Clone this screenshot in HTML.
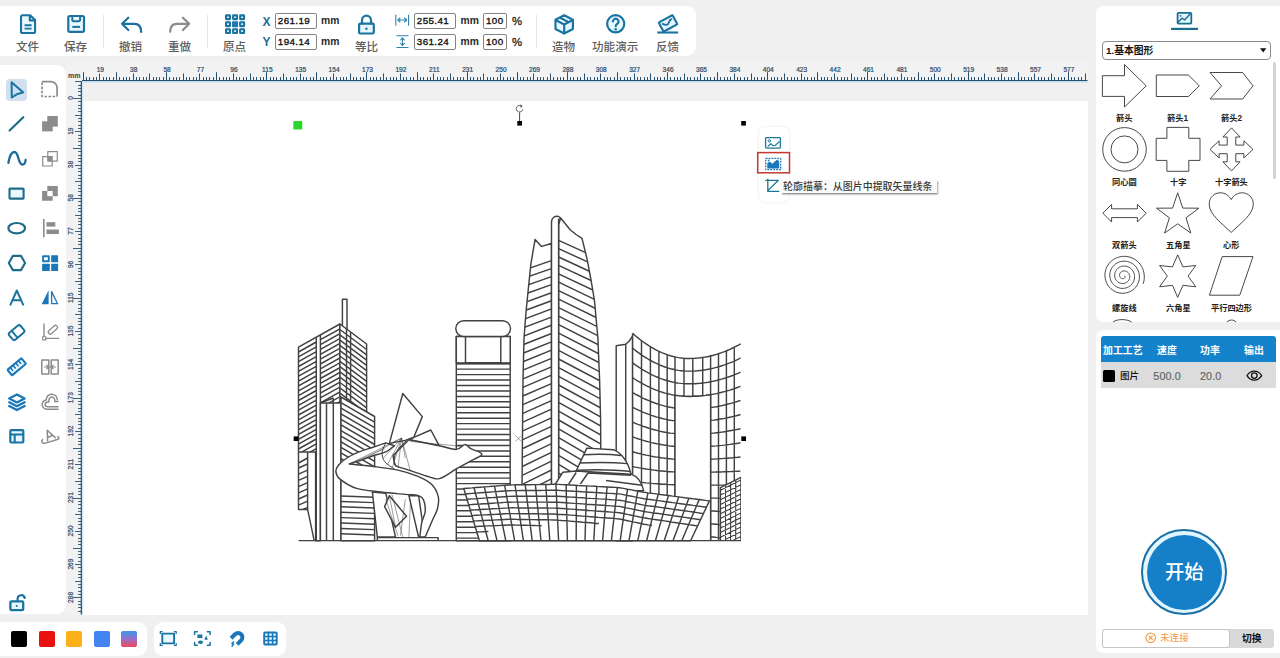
<!DOCTYPE html><html><head><meta charset="utf-8"><title>Laser editor</title><style>
html,body{margin:0;padding:0}
body{width:1280px;height:658px;background:#f0f0f0;position:relative;overflow:hidden;font-family:"Liberation Sans",sans-serif;color:#000}
.p{position:absolute;background:#fff}
.t{position:absolute;overflow:visible}
.t text{font-family:"Liberation Sans","Noto Sans CJK SC",sans-serif;font-size:1000px}
.a{position:absolute}
.in{position:absolute;box-sizing:border-box;border:1px solid #838383;border-radius:2px;background:#fff;font-size:9.8px;line-height:14.5px;padding:0 0 0 1.8px;color:#111;font-weight:normal;-webkit-text-stroke:0.35px #111;letter-spacing:0.4px}
.mm{position:absolute;font-size:10.3px;font-weight:bold;color:#2a2a2a;line-height:12px}
.sep{position:absolute;width:1px;background:#e4e4e4;top:15px;height:33px}
.lab{position:absolute;font-weight:bold;color:#1c6e9c;font-size:12px;line-height:12px}
</style></head><body><div class="p" style="left:0;top:6px;width:696px;height:50px;border-radius:0 9px 9px 0"></div><svg class="t" style="left:16.40px;top:40.80px" width="23.20" height="13.92" viewBox="0 0 2000 1200" fill="#5e5e5e" ><text x="0" y="880" font-weight="500">文件</text></svg><svg class="t" style="left:64.40px;top:40.80px" width="23.20" height="13.92" viewBox="0 0 2000 1200" fill="#5e5e5e" ><text x="0" y="880" font-weight="500">保存</text></svg><svg class="t" style="left:119.40px;top:40.80px" width="23.20" height="13.92" viewBox="0 0 2000 1200" fill="#5e5e5e" ><text x="0" y="880" font-weight="500">撤销</text></svg><svg class="t" style="left:167.90px;top:40.80px" width="23.20" height="13.92" viewBox="0 0 2000 1200" fill="#5e5e5e" ><text x="0" y="880" font-weight="500">重做</text></svg><svg class="t" style="left:223.40px;top:40.80px" width="23.20" height="13.92" viewBox="0 0 2000 1200" fill="#5e5e5e" ><text x="0" y="880" font-weight="500">原点</text></svg><svg class="t" style="left:355.10px;top:40.80px" width="23.20" height="13.92" viewBox="0 0 2000 1200" fill="#5e5e5e" ><text x="0" y="880" font-weight="500">等比</text></svg><svg class="t" style="left:552.40px;top:40.80px" width="23.20" height="13.92" viewBox="0 0 2000 1200" fill="#5e5e5e" ><text x="0" y="880" font-weight="500">造物</text></svg><svg class="t" style="left:592.30px;top:40.80px" width="46.40" height="13.92" viewBox="0 0 4000 1200" fill="#5e5e5e" ><text x="0" y="880" font-weight="500">功能演示</text></svg><svg class="t" style="left:655.90px;top:40.80px" width="23.20" height="13.92" viewBox="0 0 2000 1200" fill="#5e5e5e" ><text x="0" y="880" font-weight="500">反馈</text></svg><div class="sep" style="left:103px"></div><div class="sep" style="left:207px"></div><div class="sep" style="left:536px"></div><svg class="a" style="left:0;top:0;pointer-events:none" width="700" height="60" viewBox="0 0 700 60" fill="none" stroke-linecap="round" stroke-linejoin="round"><path d="M22.6 15.2h7.6l4.9 4.9v11.3a1.6 1.6 0 0 1-1.6 1.6h-10.9a1.6 1.6 0 0 1-1.6-1.6v-14.6a1.6 1.6 0 0 1 1.6-1.6zM29.8 15.4v5h5" stroke="#1b739f" stroke-width="2.1" fill="#e6f7ff"/><path d="M24.6 25.2h7M24.6 28.6h7" stroke="#1b739f" stroke-width="1.9" stroke-linecap="butt"/><rect x="68.3" y="16" width="15.7" height="15.8" rx="1.6" stroke="#1b739f" stroke-width="2.2" fill="#e6f7ff"/><path d="M72.3 16.4v3.2a1.6 1.6 0 0 0 1.6 1.6h4.6a1.6 1.6 0 0 0 1.6-1.6v-3.2" stroke="#1b739f" stroke-width="2"/><path d="M72.3 26.9h7.8" stroke="#1b739f" stroke-width="2" stroke-linecap="butt"/><path d="M128.3 17.7l-6.3 6.1l6.3 6.2M122.4 23.8h12c4.2 0 6.8 3 6.8 8.2" stroke="#1b739f" stroke-width="2.2"/><path d="M182.9 17.7l6.3 6.1l-6.3 6.2M188.8 23.8h-12c-4.2 0-6.6 3-6.6 8" stroke="#8c8c8c" stroke-width="2.2"/><rect x="226.05" y="15.35" width="3.9" height="3.8" rx="0.3" stroke="#1b739f" stroke-width="2.1" fill="#e8f8ff"/><rect x="233.10" y="15.35" width="3.9" height="3.8" rx="0.3" stroke="#1b739f" stroke-width="2.1" fill="#e8f8ff"/><rect x="240.15" y="15.35" width="3.9" height="3.8" rx="0.3" stroke="#1b739f" stroke-width="2.1" fill="#e8f8ff"/><rect x="226.05" y="22.30" width="3.9" height="3.8" rx="0.3" stroke="#1b739f" stroke-width="2.1" fill="#e8f8ff"/><rect x="232.05" y="21.25" width="6" height="5.9" rx="0.6" fill="#1a78b8"/><rect x="240.15" y="22.30" width="3.9" height="3.8" rx="0.3" stroke="#1b739f" stroke-width="2.1" fill="#e8f8ff"/><rect x="226.05" y="29.25" width="3.9" height="3.8" rx="0.3" stroke="#1b739f" stroke-width="2.1" fill="#e8f8ff"/><rect x="233.10" y="29.25" width="3.9" height="3.8" rx="0.3" stroke="#1b739f" stroke-width="2.1" fill="#e8f8ff"/><rect x="240.15" y="29.25" width="3.9" height="3.8" rx="0.3" stroke="#1b739f" stroke-width="2.1" fill="#e8f8ff"/><rect x="359.1" y="23.7" width="14.7" height="9.8" rx="1.2" stroke="#1b739f" stroke-width="2.2" fill="#e6f7ff"/><path d="M362 23.6v-3.4a4.5 4.6 0 0 1 9 0v3.4" stroke="#1b739f" stroke-width="2.2"/><circle cx="366.4" cy="28.8" r="1.2" fill="#1b739f"/><path d="M395.8 15v10.2M408.6 15v10.2M398 20h8.4M400 18l-2.2 2l2.2 2M404.5 18l2.2 2l-2.2 2" stroke="#2f82ad" stroke-width="1.1"/><path d="M396.9 35.8h11.2M396.9 47.5h11.2M402.5 38v7.4M400.6 40l1.9-2.1l1.9 2.1M400.6 43.4l1.9 2.1l1.9-2.1" stroke="#2f82ad" stroke-width="1.1"/><path d="M564.2 15.3l8.7 4.5v9.3l-8.7 4.5l-8.7-4.5v-9.3zM555.7 20l8.5 4.5l8.5-4.5M564.2 24.6v8.8" stroke="#1b739f" stroke-width="2.2" fill="#e6f7ff"/><path d="M561 16.9L569.7 21.5L567.4 22.8L558.7 18.2z" fill="#1b739f" stroke="none"/><circle cx="615.7" cy="23.8" r="8.6" stroke="#1b739f" stroke-width="2.2" fill="#e6f7ff"/><path d="M612.9 21.5a2.8 2.8 0 1 1 4.3 2.4c-1 .7-1.5 1.2-1.5 2.3" stroke="#1b739f" stroke-width="2.2"/><circle cx="615.7" cy="29.2" r="1.25" fill="#1b739f"/><g transform="rotate(-28 668 23.3)"><rect x="660.2" y="18.2" width="15.6" height="10.4" rx="0.8" stroke="#1b739f" stroke-width="2.1" fill="#e6f7ff"/><path d="M663 21.3c2.5 3.3 4.5 3.6 6.3 1.6c1.2-1.3 2.3-1.8 3.7-1.6" stroke="#1b739f" stroke-width="1.8"/></g><path d="M657.3 32.5h20.8" stroke="#1b739f" stroke-width="2.1" stroke-linecap="butt"/></svg><div class="lab" style="left:262.5px;top:15.5px">X</div><div class="lab" style="left:262.5px;top:36px">Y</div><div class="in" style="left:275px;top:13px;width:42px;height:16px">261.19</div><div class="in" style="left:275px;top:33.5px;width:42px;height:16px">194.14</div><div class="mm" style="left:321px;top:15px">mm</div><div class="mm" style="left:321px;top:35.5px">mm</div><div class="in" style="left:414px;top:12.5px;width:42px;height:16px">255.41</div><div class="in" style="left:414px;top:33.5px;width:42px;height:16px">361.24</div><div class="mm" style="left:460.5px;top:14.5px">mm</div><div class="mm" style="left:460.5px;top:35.5px">mm</div><div class="in" style="left:483px;top:12.5px;width:24px;height:16px;padding-left:2px">100</div><div class="in" style="left:483px;top:33.5px;width:24px;height:16px;padding-left:2px">100</div><div class="mm" style="left:512px;top:14.5px;font-weight:normal;-webkit-text-stroke:0.3px #222;font-size:11.3px;color:#222">%</div><div class="mm" style="left:512px;top:35.5px;font-weight:normal;-webkit-text-stroke:0.3px #222;font-size:11.3px;color:#222">%</div><div class="p" style="left:0;top:65px;width:66px;height:549px;border-radius:0 9px 9px 0"></div><div class="a" style="left:5.5px;top:78.5px;width:21.5px;height:22px;border-radius:4px;background:#cfe0f1"></div><svg class="a" style="left:0;top:0;pointer-events:none" width="70" height="620" viewBox="0 0 70 620" fill="none" stroke-linecap="round" stroke-linejoin="round"><path d="M11.6 82.2l11.7 10.2l-6.6 1.9l-4.9 3.2z" stroke="#1b739f" stroke-width="2"/><path d="M42 81.6h8.8a6.3 6.3 0 0 1 6.3 6.3v8.6" stroke="#8c8c8c" stroke-width="1.7" stroke-linecap="butt"/><path d="M42 82.5v14h15" stroke="#8c8c8c" stroke-width="1.7" stroke-dasharray="2.6 1.5" stroke-linecap="butt"/><path d="M9.6 130.5l13.7-13.3" stroke="#1d6c8a" stroke-width="2.2"/><rect x="47.3" y="116" width="10.5" height="10.6" fill="#8c8c8c"/><rect x="42.1" y="121.3" width="10.6" height="10.1" fill="#8c8c8c"/><path d="M8.4 162.8c1-6 3-10.8 6-10.8c4.6 0 3.4 12.6 8 12.6c1.8 0 3-2 3.2-4.6" stroke="#1b6a99" stroke-width="2.3"/><rect x="47.8" y="151.6" width="9.5" height="9.5" stroke="#8c8c8c" stroke-width="1.2"/><rect x="42.7" y="156.7" width="9.5" height="9.3" stroke="#8c8c8c" stroke-width="1.2"/><rect x="47.8" y="156.7" width="4.4" height="4.4" fill="#8c8c8c"/><rect x="9.5" y="188.6" width="14.1" height="10" rx="0.6" stroke="#1d6c8a" stroke-width="2.1" fill="#e9f9ff"/><path fill-rule="evenodd" d="M47.3 186h10.5v10.3h-5.1v4.4h-10.6v-9.8h5.2zM47.3 190.9v5.4h5.4v-5.4z" fill="#8c8c8c"/><ellipse cx="16.7" cy="228.2" rx="8.3" ry="5.2" stroke="#1d6c8a" stroke-width="2.2"/><path d="M43.8 219v18.3" stroke="#8c8c8c" stroke-width="1.6" stroke-linecap="butt"/><rect x="46.5" y="222.2" width="8.8" height="4.4" fill="#8c8c8c"/><rect x="46.5" y="229.5" width="12.4" height="4.5" fill="#8c8c8c"/><path d="M12.9 255.9h8.1l4.1 7.1l-4.1 7.1h-8.1l-4.1-7.1z" stroke="#1d6c8a" stroke-width="2.1"/><rect x="43.1" y="256.3" width="5.7" height="5" stroke="#1a78b8" stroke-width="1.9"/><rect x="51.2" y="255.3" width="6.9" height="6.9" rx="0.5" fill="#1a78b8"/><rect x="42.1" y="263.8" width="7.7" height="7.1" rx="0.5" fill="#1a78b8"/><rect x="51.2" y="263.8" width="6.9" height="7.1" rx="0.5" fill="#1a78b8"/><path d="M10.5 304.7l6.3-14.2l6.3 14.2M12.7 300.3h8.2" stroke="#1b739f" stroke-width="2"/><path d="M48.6 290.2v14.1h-7z" fill="#1a78b8"/><path d="M51.6 291.6v12.1h6z" stroke="#1a78b8" stroke-width="1.3"/><g transform="rotate(-40 16.6 332.6)"><rect x="9.2" y="328" width="14.8" height="9.2" rx="2.2" stroke="#1b739f" stroke-width="2"/><path d="M14 328.2v8.8" stroke="#1b739f" stroke-width="1.8"/></g><path d="M44 324v12.4M46 338.4h12.8" stroke="#8c8c8c" stroke-width="1.4"/><rect x="42.6" y="336.7" width="3.2" height="3.2" stroke="#8c8c8c" stroke-width="1.1"/><g transform="rotate(-41 52.8 329.7)"><rect x="47.4" y="327.8" width="10.8" height="3.9" rx="1.6" stroke="#8c8c8c" stroke-width="1.3"/></g><g transform="rotate(-40 16.7 366.8)"><rect x="7.6" y="363.2" width="18.2" height="7.2" rx="0.8" stroke="#1a78b8" stroke-width="2.1" fill="#e6f6ff"/><path d="M11.2 363.4v3.4M14.8 363.4v3.4M18.4 363.4v3.4M22 363.4v3.4" stroke="#1a78b8" stroke-width="1.6"/></g><rect x="41.8" y="360" width="7" height="14" stroke="#8c8c8c" stroke-width="1.5"/><rect x="51.2" y="360" width="7" height="14" stroke="#8c8c8c" stroke-width="1.5"/><path d="M44.5 367h11M46.8 365.2l1.9 1.8l-1.9 1.8M53.2 365.2l-1.9 1.8l1.9 1.8" stroke="#8c8c8c" stroke-width="1.2"/><path d="M16.9 394.4l7.7 4l-7.7 4l-7.7-4zM9.2 402.3l7.7 4l7.7-4M9.2 406l7.7 4l7.7-4" stroke="#1a78b8" stroke-width="2.3"/><path d="M58 409.3h-10.5c-3 0-5.3-2-5.3-4.7c0-2.3 1.7-4.1 3.9-4.5c0-3.4 2.5-5.9 5.6-5.9c3.1 0 5.5 2.4 5.6 5.5" stroke="#8c8c8c" stroke-width="1.5"/><path d="M58 406.7h-10c-1.8 0-2.9-1-2.9-2.3c0-1.4 1.2-2.3 2.8-2.3h1c-.6-2.8.8-5 2.9-5c2 0 3.3 1.8 2.9 4.4h3.3" stroke="#8c8c8c" stroke-width="1.5"/><rect x="10.3" y="430.1" width="13" height="12.4" rx="1" stroke="#1b739f" stroke-width="2.2" fill="#e6f7ff"/><path d="M10.5 434.4h12.6M14.7 434.6v7.7" stroke="#1b739f" stroke-width="2"/><g transform="rotate(-24 50 436)"><path d="M45.8 439.6l4-10l4.3 10M47.2 436.4h5.5" stroke="#8c8c8c" stroke-width="1.5"/></g><path d="M42.6 439.6c-1.8 1.8-.3 4.3 2.8 3.5l12.6-3.9c1.3-.5 1.2-2-.2-2.5" stroke="#8c8c8c" stroke-width="1.5"/><rect x="10.4" y="601.4" width="12.8" height="8.8" rx="1.2" stroke="#1b739f" stroke-width="2.3" fill="#e6f7ff"/><path d="M17.6 601v-2.3a3.6 3.6 0 0 1 7.1-.7" stroke="#1b739f" stroke-width="2.2"/><circle cx="16.7" cy="606" r="1.1" fill="#1b739f"/></svg><div class="a" style="left:66px;top:62px;width:1022px;height:20px;background:#f2f2f2"></div><div class="a" style="left:66px;top:82px;width:16px;height:533px;background:#f2f2f2"></div><div class="p" style="left:82px;top:101.4px;width:1006px;height:513.2px"></div><svg class="a" style="left:0;top:0" width="1100" height="620" viewBox="0 0 1100 620"><path d="M83.5 80.5v-8.3M86.5 80.5v-3.4M89.5 80.5v-3.4M93.5 80.5v-3.4M96.5 80.5v-3.4M99.5 80.5v-7M103.5 80.5v-3.4M106.5 80.5v-3.4M109.5 80.5v-3.4M113.5 80.5v-3.4M116.5 80.5v-8.3M119.5 80.5v-3.4M123.5 80.5v-3.4M126.5 80.5v-3.4M129.5 80.5v-3.4M133.5 80.5v-7M136.5 80.5v-3.4M139.5 80.5v-3.4M143.5 80.5v-3.4M146.5 80.5v-3.4M149.5 80.5v-7M153.5 80.5v-3.4M156.5 80.5v-3.4M159.5 80.5v-3.4M163.5 80.5v-3.4M166.5 80.5v-8.3M169.5 80.5v-3.4M173.5 80.5v-3.4M176.5 80.5v-3.4M179.5 80.5v-3.4M183.5 80.5v-7M186.5 80.5v-3.4M189.5 80.5v-3.4M193.5 80.5v-3.4M196.5 80.5v-3.4M199.5 80.5v-7M203.5 80.5v-3.4M206.5 80.5v-3.4M209.5 80.5v-3.4M213.5 80.5v-3.4M216.5 80.5v-8.3M219.5 80.5v-3.4M223.5 80.5v-3.4M226.5 80.5v-3.4M229.5 80.5v-3.4M233.5 80.5v-7M236.5 80.5v-3.4M239.5 80.5v-3.4M243.5 80.5v-3.4M246.5 80.5v-3.4M250.5 80.5v-7M253.5 80.5v-3.4M256.5 80.5v-3.4M260.5 80.5v-3.4M263.5 80.5v-3.4M266.5 80.5v-8.3M270.5 80.5v-3.4M273.5 80.5v-3.4M276.5 80.5v-3.4M280.5 80.5v-3.4M283.5 80.5v-7M286.5 80.5v-3.4M290.5 80.5v-3.4M293.5 80.5v-3.4M296.5 80.5v-3.4M300.5 80.5v-7M303.5 80.5v-3.4M306.5 80.5v-3.4M310.5 80.5v-3.4M313.5 80.5v-3.4M316.5 80.5v-8.3M320.5 80.5v-3.4M323.5 80.5v-3.4M326.5 80.5v-3.4M330.5 80.5v-3.4M333.5 80.5v-7M336.5 80.5v-3.4M340.5 80.5v-3.4M343.5 80.5v-3.4M346.5 80.5v-3.4M350.5 80.5v-7M353.5 80.5v-3.4M356.5 80.5v-3.4M360.5 80.5v-3.4M363.5 80.5v-3.4M366.5 80.5v-8.3M370.5 80.5v-3.4M373.5 80.5v-3.4M376.5 80.5v-3.4M380.5 80.5v-3.4M383.5 80.5v-7M386.5 80.5v-3.4M390.5 80.5v-3.4M393.5 80.5v-3.4M396.5 80.5v-3.4M400.5 80.5v-7M403.5 80.5v-3.4M406.5 80.5v-3.4M410.5 80.5v-3.4M413.5 80.5v-3.4M417.5 80.5v-8.3M420.5 80.5v-3.4M423.5 80.5v-3.4M427.5 80.5v-3.4M430.5 80.5v-3.4M433.5 80.5v-7M437.5 80.5v-3.4M440.5 80.5v-3.4M443.5 80.5v-3.4M447.5 80.5v-3.4M450.5 80.5v-7M453.5 80.5v-3.4M457.5 80.5v-3.4M460.5 80.5v-3.4M463.5 80.5v-3.4M467.5 80.5v-8.3M470.5 80.5v-3.4M473.5 80.5v-3.4M477.5 80.5v-3.4M480.5 80.5v-3.4M483.5 80.5v-7M487.5 80.5v-3.4M490.5 80.5v-3.4M493.5 80.5v-3.4M497.5 80.5v-3.4M500.5 80.5v-7M503.5 80.5v-3.4M507.5 80.5v-3.4M510.5 80.5v-3.4M513.5 80.5v-3.4M517.5 80.5v-8.3M520.5 80.5v-3.4M523.5 80.5v-3.4M527.5 80.5v-3.4M530.5 80.5v-3.4M533.5 80.5v-7M537.5 80.5v-3.4M540.5 80.5v-3.4M543.5 80.5v-3.4M547.5 80.5v-3.4M550.5 80.5v-7M553.5 80.5v-3.4M557.5 80.5v-3.4M560.5 80.5v-3.4M563.5 80.5v-3.4M567.5 80.5v-8.3M570.5 80.5v-3.4M573.5 80.5v-3.4M577.5 80.5v-3.4M580.5 80.5v-3.4M584.5 80.5v-7M587.5 80.5v-3.4M590.5 80.5v-3.4M594.5 80.5v-3.4M597.5 80.5v-3.4M600.5 80.5v-7M604.5 80.5v-3.4M607.5 80.5v-3.4M610.5 80.5v-3.4M614.5 80.5v-3.4M617.5 80.5v-8.3M620.5 80.5v-3.4M624.5 80.5v-3.4M627.5 80.5v-3.4M630.5 80.5v-3.4M634.5 80.5v-7M637.5 80.5v-3.4M640.5 80.5v-3.4M644.5 80.5v-3.4M647.5 80.5v-3.4M650.5 80.5v-7M654.5 80.5v-3.4M657.5 80.5v-3.4M660.5 80.5v-3.4M664.5 80.5v-3.4M667.5 80.5v-8.3M670.5 80.5v-3.4M674.5 80.5v-3.4M677.5 80.5v-3.4M680.5 80.5v-3.4M684.5 80.5v-7M687.5 80.5v-3.4M690.5 80.5v-3.4M694.5 80.5v-3.4M697.5 80.5v-3.4M700.5 80.5v-7M704.5 80.5v-3.4M707.5 80.5v-3.4M710.5 80.5v-3.4M714.5 80.5v-3.4M717.5 80.5v-8.3M720.5 80.5v-3.4M724.5 80.5v-3.4M727.5 80.5v-3.4M730.5 80.5v-3.4M734.5 80.5v-7M737.5 80.5v-3.4M740.5 80.5v-3.4M744.5 80.5v-3.4M747.5 80.5v-3.4M751.5 80.5v-7M754.5 80.5v-3.4M757.5 80.5v-3.4M761.5 80.5v-3.4M764.5 80.5v-3.4M767.5 80.5v-8.3M771.5 80.5v-3.4M774.5 80.5v-3.4M777.5 80.5v-3.4M781.5 80.5v-3.4M784.5 80.5v-7M787.5 80.5v-3.4M791.5 80.5v-3.4M794.5 80.5v-3.4M797.5 80.5v-3.4M801.5 80.5v-7M804.5 80.5v-3.4M807.5 80.5v-3.4M811.5 80.5v-3.4M814.5 80.5v-3.4M817.5 80.5v-8.3M821.5 80.5v-3.4M824.5 80.5v-3.4M827.5 80.5v-3.4M831.5 80.5v-3.4M834.5 80.5v-7M837.5 80.5v-3.4M841.5 80.5v-3.4M844.5 80.5v-3.4M847.5 80.5v-3.4M851.5 80.5v-7M854.5 80.5v-3.4M857.5 80.5v-3.4M861.5 80.5v-3.4M864.5 80.5v-3.4M867.5 80.5v-8.3M871.5 80.5v-3.4M874.5 80.5v-3.4M877.5 80.5v-3.4M881.5 80.5v-3.4M884.5 80.5v-7M887.5 80.5v-3.4M891.5 80.5v-3.4M894.5 80.5v-3.4M897.5 80.5v-3.4M901.5 80.5v-7M904.5 80.5v-3.4M907.5 80.5v-3.4M911.5 80.5v-3.4M914.5 80.5v-3.4M918.5 80.5v-8.3M921.5 80.5v-3.4M924.5 80.5v-3.4M928.5 80.5v-3.4M931.5 80.5v-3.4M934.5 80.5v-7M938.5 80.5v-3.4M941.5 80.5v-3.4M944.5 80.5v-3.4M948.5 80.5v-3.4M951.5 80.5v-7M954.5 80.5v-3.4M958.5 80.5v-3.4M961.5 80.5v-3.4M964.5 80.5v-3.4M968.5 80.5v-8.3M971.5 80.5v-3.4M974.5 80.5v-3.4M978.5 80.5v-3.4M981.5 80.5v-3.4M984.5 80.5v-7M988.5 80.5v-3.4M991.5 80.5v-3.4M994.5 80.5v-3.4M998.5 80.5v-3.4M1001.5 80.5v-7M1004.5 80.5v-3.4M1008.5 80.5v-3.4M1011.5 80.5v-3.4M1014.5 80.5v-3.4M1018.5 80.5v-8.3M1021.5 80.5v-3.4M1024.5 80.5v-3.4M1028.5 80.5v-3.4M1031.5 80.5v-3.4M1034.5 80.5v-7M1038.5 80.5v-3.4M1041.5 80.5v-3.4M1044.5 80.5v-3.4M1048.5 80.5v-3.4M1051.5 80.5v-7M1054.5 80.5v-3.4M1058.5 80.5v-3.4M1061.5 80.5v-3.4M1064.5 80.5v-3.4M1068.5 80.5v-8.3M1071.5 80.5v-3.4M1074.5 80.5v-3.4M1078.5 80.5v-3.4M1081.5 80.5v-3.4M1085.5 80.5v-7" stroke="#24506f" stroke-width="1" fill="none"/><path d="M82 80.6H1087.5" stroke="#24506f" stroke-width="1.3"/><path d="M82 82H1087.5" stroke="#cfe6f2" stroke-width="1.4"/><path d="M81.3 81.5h-6.2M81.3 85.5h-3.2M81.3 88.5h-3.2M81.3 91.5h-3.2M81.3 95.5h-3.2M81.3 98.5h-8.3M81.3 101.5h-3.2M81.3 105.5h-3.2M81.3 108.5h-3.2M81.3 111.5h-3.2M81.3 115.5h-6.2M81.3 118.5h-3.2M81.3 121.5h-3.2M81.3 125.5h-3.2M81.3 128.5h-3.2M81.3 131.5h-6.2M81.3 135.5h-3.2M81.3 138.5h-3.2M81.3 141.5h-3.2M81.3 145.5h-3.2M81.3 148.5h-8.3M81.3 151.5h-3.2M81.3 155.5h-3.2M81.3 158.5h-3.2M81.3 161.5h-3.2M81.3 165.5h-6.2M81.3 168.5h-3.2M81.3 171.5h-3.2M81.3 175.5h-3.2M81.3 178.5h-3.2M81.3 181.5h-6.2M81.3 185.5h-3.2M81.3 188.5h-3.2M81.3 191.5h-3.2M81.3 195.5h-3.2M81.3 198.5h-8.3M81.3 201.5h-3.2M81.3 205.5h-3.2M81.3 208.5h-3.2M81.3 211.5h-3.2M81.3 215.5h-6.2M81.3 218.5h-3.2M81.3 221.5h-3.2M81.3 224.5h-3.2M81.3 228.5h-3.2M81.3 231.5h-6.2M81.3 234.5h-3.2M81.3 238.5h-3.2M81.3 241.5h-3.2M81.3 244.5h-3.2M81.3 248.5h-8.3M81.3 251.5h-3.2M81.3 254.5h-3.2M81.3 258.5h-3.2M81.3 261.5h-3.2M81.3 264.5h-6.2M81.3 268.5h-3.2M81.3 271.5h-3.2M81.3 274.5h-3.2M81.3 278.5h-3.2M81.3 281.5h-6.2M81.3 284.5h-3.2M81.3 288.5h-3.2M81.3 291.5h-3.2M81.3 294.5h-3.2M81.3 298.5h-8.3M81.3 301.5h-3.2M81.3 304.5h-3.2M81.3 308.5h-3.2M81.3 311.5h-3.2M81.3 314.5h-6.2M81.3 318.5h-3.2M81.3 321.5h-3.2M81.3 324.5h-3.2M81.3 328.5h-3.2M81.3 331.5h-6.2M81.3 334.5h-3.2M81.3 338.5h-3.2M81.3 341.5h-3.2M81.3 344.5h-3.2M81.3 348.5h-8.3M81.3 351.5h-3.2M81.3 354.5h-3.2M81.3 358.5h-3.2M81.3 361.5h-3.2M81.3 364.5h-6.2M81.3 368.5h-3.2M81.3 371.5h-3.2M81.3 374.5h-3.2M81.3 378.5h-3.2M81.3 381.5h-6.2M81.3 384.5h-3.2M81.3 388.5h-3.2M81.3 391.5h-3.2M81.3 394.5h-3.2M81.3 398.5h-8.3M81.3 401.5h-3.2M81.3 404.5h-3.2M81.3 408.5h-3.2M81.3 411.5h-3.2M81.3 414.5h-6.2M81.3 418.5h-3.2M81.3 421.5h-3.2M81.3 424.5h-3.2M81.3 428.5h-3.2M81.3 431.5h-6.2M81.3 434.5h-3.2M81.3 438.5h-3.2M81.3 441.5h-3.2M81.3 444.5h-3.2M81.3 448.5h-8.3M81.3 451.5h-3.2M81.3 454.5h-3.2M81.3 458.5h-3.2M81.3 461.5h-3.2M81.3 464.5h-6.2M81.3 468.5h-3.2M81.3 471.5h-3.2M81.3 474.5h-3.2M81.3 478.5h-3.2M81.3 481.5h-6.2M81.3 484.5h-3.2M81.3 488.5h-3.2M81.3 491.5h-3.2M81.3 494.5h-3.2M81.3 498.5h-8.3M81.3 501.5h-3.2M81.3 504.5h-3.2M81.3 508.5h-3.2M81.3 511.5h-3.2M81.3 514.5h-6.2M81.3 518.5h-3.2M81.3 521.5h-3.2M81.3 524.5h-3.2M81.3 528.5h-3.2M81.3 531.5h-6.2M81.3 534.5h-3.2M81.3 538.5h-3.2M81.3 541.5h-3.2M81.3 544.5h-3.2M81.3 548.5h-8.3M81.3 551.5h-3.2M81.3 554.5h-3.2M81.3 557.5h-3.2M81.3 561.5h-3.2M81.3 564.5h-6.2M81.3 567.5h-3.2M81.3 571.5h-3.2M81.3 574.5h-3.2M81.3 577.5h-3.2M81.3 581.5h-6.2M81.3 584.5h-3.2M81.3 587.5h-3.2M81.3 591.5h-3.2M81.3 594.5h-3.2M81.3 597.5h-8.3M81.3 601.5h-3.2M81.3 604.5h-3.2M81.3 607.5h-3.2M81.3 611.5h-3.2" stroke="#24506f" stroke-width="0.9" fill="none"/><path d="M81.3 81V614.5" stroke="#24506f" stroke-width="1.2"/><path d="M82.6 82V614.5" stroke="#cfe6f2" stroke-width="1.2"/><g font-family="Liberation Sans, sans-serif" font-size="6.6" font-weight="normal" fill="#2f4d69" stroke="#2f4d69" stroke-width="0.22" text-anchor="middle"><text x="100.3" y="72">19</text><text x="133.7" y="72">38</text><text x="167.1" y="72">58</text><text x="200.5" y="72">77</text><text x="233.9" y="72">96</text><text x="267.3" y="72">115</text><text x="300.7" y="72">135</text><text x="334.1" y="72">154</text><text x="367.5" y="72">173</text><text x="400.9" y="72">192</text><text x="434.3" y="72">211</text><text x="467.7" y="72">231</text><text x="501.1" y="72">250</text><text x="534.5" y="72">269</text><text x="567.9" y="72">288</text><text x="601.3" y="72">308</text><text x="634.7" y="72">327</text><text x="668.1" y="72">346</text><text x="701.5" y="72">365</text><text x="734.9" y="72">384</text><text x="768.3" y="72">404</text><text x="801.7" y="72">423</text><text x="835.1" y="72">442</text><text x="868.5" y="72">461</text><text x="901.9" y="72">481</text><text x="935.3" y="72">500</text><text x="968.7" y="72">519</text><text x="1002.1" y="72">538</text><text x="1035.5" y="72">557</text><text x="1068.9" y="72">577</text><text x="74.3" y="78.3" font-size="7" fill="#2c3e50" font-weight="bold" stroke="none">mm</text><text transform="translate(72.8 97.9) rotate(-90)" x="0" y="0">0</text><text transform="translate(72.8 131.2) rotate(-90)" x="0" y="0">19</text><text transform="translate(72.8 164.6) rotate(-90)" x="0" y="0">38</text><text transform="translate(72.8 197.8) rotate(-90)" x="0" y="0">58</text><text transform="translate(72.8 231.1) rotate(-90)" x="0" y="0">77</text><text transform="translate(72.8 264.4) rotate(-90)" x="0" y="0">96</text><text transform="translate(72.8 297.8) rotate(-90)" x="0" y="0">115</text><text transform="translate(72.8 331.1) rotate(-90)" x="0" y="0">135</text><text transform="translate(72.8 364.4) rotate(-90)" x="0" y="0">154</text><text transform="translate(72.8 397.7) rotate(-90)" x="0" y="0">173</text><text transform="translate(72.8 431.0) rotate(-90)" x="0" y="0">192</text><text transform="translate(72.8 464.2) rotate(-90)" x="0" y="0">211</text><text transform="translate(72.8 497.6) rotate(-90)" x="0" y="0">231</text><text transform="translate(72.8 530.9) rotate(-90)" x="0" y="0">250</text><text transform="translate(72.8 564.1) rotate(-90)" x="0" y="0">269</text><text transform="translate(72.8 597.4) rotate(-90)" x="0" y="0">288</text></g></svg><svg class="a" style="left:0;top:0" width="1090" height="620" viewBox="0 0 1090 620" fill="none" stroke="#414141" stroke-width="1.45" stroke-linejoin="round"><path d="M342.4 327V299.3h4.6V331" fill="#fff"/><clipPath id="c1"><path d="M298.5 347.1L339.9 324L339.9 403L320.4 403L320.4 540.7L315.6 540.7L315.6 452L298.5 452Z"/></clipPath><path d="M298.5 347.1L339.9 324L339.9 403L320.4 403L320.4 540.7L315.6 540.7L315.6 452L298.5 452Z" fill="#fff" stroke="none"/><path clip-path="url(#c1)" d="M298.5 352L316.3 342M320.4 339.7L339.9 328.9M298.5 356.8L316.3 346.9M320.4 344.6L339.9 333.7M298.5 361.7L316.3 351.7M320.4 349.4L339.9 338.6M298.5 366.5L316.3 356.6M320.4 354.3L339.9 343.4M298.5 371.4L316.3 361.4M320.4 359.1L339.9 348.3M298.5 376.2L316.3 366.3M320.4 364L339.9 353.1M298.5 381.1L316.3 371.1M320.4 368.8L339.9 358M298.5 385.9L316.3 376M320.4 373.7L339.9 362.8M298.5 390.8L316.3 380.8M320.4 378.5L339.9 367.7M298.5 395.6L316.3 385.7M320.4 383.4L339.9 372.5M298.5 400.5L316.3 390.5M320.4 388.2L339.9 377.4M298.5 405.3L316.3 395.4M320.4 393.1L339.9 382.2M298.5 410.2L316.3 400.2M320.4 397.9L339.9 387.1M298.5 415L316.3 405.1M320.4 402.8L339.9 391.9M298.5 419.9L316.3 409.9M320.4 407.6L339.9 396.8M298.5 424.7L316.3 414.8M320.4 412.5L339.9 401.6M298.5 429.6L316.3 419.6M320.4 417.3L339.9 406.5M298.5 434.4L316.3 424.5M320.4 422.2L339.9 411.3M298.5 439.3L316.3 429.3M320.4 427L339.9 416.2M298.5 444.1L316.3 434.2M320.4 431.9L339.9 421M298.5 449L316.3 439M320.4 436.7L339.9 425.9M298.5 453.8L316.3 443.9M320.4 441.6L339.9 430.7M298.5 458.7L316.3 448.7M320.4 446.4L339.9 435.6M298.5 463.5L316.3 453.6M320.4 451.3L339.9 440.4M298.5 468.4L316.3 458.4M320.4 456.1L339.9 445.3M316.3 337V540.7M320.4 334V540.7"/><path d="M298.5 347.1L339.9 324L339.9 403L320.4 403L320.4 540.7L315.6 540.7L315.6 452L298.5 452Z"/><clipPath id="c2"><path d="M298.5 463L307.6 458L307.6 509.4L298.5 509.4Z"/></clipPath><path d="M298.5 463L307.6 458L307.6 509.4L298.5 509.4Z" fill="#fff" stroke="none"/><path clip-path="url(#c2)" d="M298.5 468L307.6 464M298.5 474.2L307.6 470.2M298.5 480.4L307.6 476.4M298.5 486.6L307.6 482.6M298.5 492.8L307.6 488.8M298.5 499L307.6 495M298.5 505.2L307.6 501.2M298.5 511.4L307.6 507.4"/><path d="M298.5 463L307.6 458L307.6 509.4L298.5 509.4Z"/><path d="M307.6 509.4L314.2 540.7M298.5 452V463M307.6 452v6"/><path d="M326.5 403V540.7M333.3 398V540.7M341 397V540.7M320.4 403L333.3 398"/><clipPath id="c3"><path d="M339.9 324L366.6 344L366.6 411.8L339.9 397Z"/></clipPath><path d="M339.9 324L366.6 344L366.6 411.8L339.9 397Z" fill="#fff" stroke="none"/><path clip-path="url(#c3)" d="M339.9 329.5L366.6 349.5M339.9 334.8L366.6 354.8M339.9 340.1L366.6 360.1M339.9 345.4L366.6 365.4M339.9 350.7L366.6 370.7M339.9 356L366.6 376M339.9 361.3L366.6 381.3M339.9 366.6L366.6 386.6M339.9 371.9L366.6 391.9M339.9 377.2L366.6 397.2M339.9 382.5L366.6 402.5M339.9 387.8L366.6 407.8M339.9 393.1L366.6 413.1M339.9 398.4L366.6 418.4M346.5 328V401M350.6 331.5V403"/><path d="M339.9 324L366.6 344L366.6 411.8L339.9 397Z"/><clipPath id="c4"><path d="M341 397L374.6 416.5L374.6 540.7L341 540.7Z"/></clipPath><path d="M341 397L374.6 416.5L374.6 540.7L341 540.7Z" fill="#fff" stroke="none"/><path clip-path="url(#c4)" d="M341 402.6L374.6 422.1M341 408.2L374.6 427.7M341 413.8L374.6 433.3M341 419.4L374.6 438.9M341 425L374.6 444.5M341 430.6L374.6 450.1M341 436.2L374.6 455.7M341 441.8L374.6 461.3M341 447.4L374.6 466.9M341 453L374.6 472.5M341 458.6L374.6 478.1M341 464.2L374.6 483.7M341 469.8L374.6 489.3M341 496L374.6 497.2M341 501.4L374.6 502.6M341 506.8L374.6 508M341 512.2L374.6 513.4M341 517.6L374.6 518.8M341 523L374.6 524.2M341 528.4L374.6 529.6M341 533.8L374.6 535"/><path d="M341 397L374.6 416.5L374.6 540.7L341 540.7Z"/><clipPath id="c5"><path d="M456.3 336.5L510.2 336.5L510.2 540.7L456.3 540.7Z"/></clipPath><path d="M456.3 336.5L510.2 336.5L510.2 540.7L456.3 540.7Z" fill="#fff" stroke="none"/><path clip-path="url(#c5)" d="M456.3 363.7H510.2M456.3 369.1H510.2M456.3 374.6H510.2M456.3 380H510.2M456.3 385.5H510.2M456.3 390.9H510.2M456.3 396.4H510.2M456.3 401.8H510.2M456.3 407.3H510.2M456.3 412.7H510.2M456.3 418.2H510.2M456.3 423.6H510.2M456.3 429.1H510.2M456.3 434.5H510.2M456.3 440H510.2M456.3 445.4H510.2M456.3 450.9H510.2M456.3 456.3H510.2M456.3 461.8H510.2M456.3 467.2H510.2M456.3 472.7H510.2M456.3 478.1H510.2M456.3 483.6H510.2M456.3 489H510.2M456.3 494.5H510.2M456.3 499.9H510.2M456.3 505.4H510.2M456.3 510.8H510.2M456.3 516.3H510.2M456.3 521.7H510.2M456.3 527.2H510.2M456.3 532.6H510.2M456.3 538.1H510.2"/><path d="M456.3 336.5L510.2 336.5L510.2 540.7L456.3 540.7Z"/><rect x="456.3" y="336.5" width="53.9" height="26.5" fill="#fff"/><path d="M465.5 336.5V362.8M500.8 336.5V362.8M465.5 362.8H500.8M456.3 363.5H510.2"/><rect x="455.8" y="320.7" width="54.7" height="15.8" rx="7.9" fill="#fff"/><path d="M377.3 540.7V537.6H438.1V540.7" fill="#fff"/><path d="M372.4 492L385.8 493.2L395.5 537L377.3 537Z" fill="#fff"/><path d="M408.9 495.7L418.6 495.7L424.7 537L418.6 537Z" fill="#fff"/><path d="M389.4 495.7L406.5 516.3L395.5 527.3L384.6 506.6Z" fill="#fff"/><path d="M385.8 499.3L398 535.8M391.9 494.4L402.8 537M405.3 499.3L400.4 535.8M410.6 499.3L408.9 537M389.4 495.7L395.5 527.3" stroke-width="0.5"/><path d="M402.8 393.5L422.3 416.6L413.8 437.3L405.3 440.4L389.4 443.4Z" fill="#fff"/><path d="M413.8 437.3L430.8 430L439.3 445.8L408.9 440.4Z" fill="#fff"/><path d="M408.9 439.7C414 440.7 431.4 444.2 439.3 445.8C447.2 447.4 452.1 449.6 456.3 449.4C460.6 449.2 462.4 444.7 464.8 444.6C467.3 444.5 468.1 447.1 470.9 448.7C473.8 450.3 481.9 452.3 481.9 454.3C481.9 456.3 475.2 458.4 470.9 460.9C466.7 463.3 461.6 465.9 456.3 468.9C451.1 471.9 444.2 477.4 439.3 478.6C434.4 479.8 432.8 477.8 427.1 476.2C421.5 474.6 410.5 470.7 405.3 468.9C400 467.1 397.6 467.5 395.5 465.3C393.5 463 393.5 457.1 393.1 455.5Z" fill="#fff"/><path d="M385.8 442.9C383.8 443.6 378.1 445.5 373.6 447C369.2 448.5 363.5 450.1 359 451.9C354.6 453.7 350.3 455.7 346.9 458C343.4 460.2 340.2 462.9 338.4 465.3C336.6 467.6 335.7 469.5 335.9 471.8C336.2 474.1 336.6 476.4 340.1 479.1C343.5 481.9 349.8 486.2 356.6 488.4C363.4 490.5 372.8 491 380.9 492C389 493 399 493.8 405.3 494.4C411.5 495 415.6 494.8 418.6 495.7C421.7 496.5 422.4 497.2 423.5 499.8C424.6 502.4 425.5 507.7 425.2 511.5C424.9 515.2 422.7 518.1 421.8 522.4C420.9 526.7 420.2 534.6 419.8 537L425.2 537C426.3 534.4 430 525.8 432 521.2C434 516.5 436.3 513.1 437.4 509C438.4 505 439.2 500.9 438.3 496.9C437.4 492.8 435.5 488.2 432 484.7C428.5 481.3 423.1 478.6 417.4 476.2C411.7 473.8 405.3 471.7 398 470.1C390.7 468.5 381.7 467.5 373.6 466.5C365.5 465.5 353.4 464.4 349.3 464L349.3 464C351.3 463.3 357.4 461.3 361.5 459.9C365.5 458.5 369.6 456.9 373.6 455.5C377.7 454.2 382.4 453.5 385.8 451.9C389.2 450.3 392.9 446.8 394.3 445.8Z" fill="#fff"/><path d="M385.8 442.9C385.2 444.4 382.4 448.8 382.1 451.9C381.9 455 382.6 458.8 384.6 461.6C386.6 464.4 392.7 467.7 394.3 468.9M406.5 440.4C405.1 441.9 400 446.5 398 449.4C395.9 452.4 394.7 455.1 394.3 458C393.9 460.8 395.3 465.1 395.5 466.5" stroke-width="1"/><path d="M401.6 438L383.4 458M401.6 438L387 465.3M401.6 438L391.9 468.9M401.6 438L398 467.7M401.6 438L405.3 458M401.6 438L410.1 470.1M401.6 438L356.6 463.3M401.6 438L349.3 464" stroke-width="0.5"/><path d="M408.9 439L451.5 448.7M410.1 441.4L461.2 446.3M349.3 464L384.6 448.7" stroke-width="0.5"/><clipPath id="c6"><path d="M535.1 239.4L530.9 263.8L528.2 290L526 312L524 338.3L523 380L522.6 420L522 490L551.5 490L551.5 243.5L541.5 246.4Z"/></clipPath><path d="M535.1 239.4L530.9 263.8L528.2 290L526 312L524 338.3L523 380L522.6 420L522 490L551.5 490L551.5 243.5L541.5 246.4Z" fill="#fff" stroke="none"/><path clip-path="url(#c6)" d="M551.5 260.6L521 271M551.5 268.6L521 279.1M551.5 276.6L521 287.3M551.5 284.6L521 295.5M551.5 292.7L521 303.8M551.5 300.8L521 312M551.5 308.9L521 320.4M551.5 317.1L521 328.7M551.5 325.3L521 337.1M551.5 333.5L521 345.5M551.5 341.8L521 354M551.5 350.1L521 362.5M551.5 358.4L521 371M551.5 366.8L521 379.6M551.5 375.2L521 388.2M551.5 383.7L521 396.8M551.5 392.2L521 405.5M551.5 400.7L521 414.2M551.5 409.2L521 422.9M551.5 417.8L521 431.7M551.5 426.4L521 440.5M551.5 435L521 449.3M551.5 443.7L521 458.2M551.5 452.4L521 467.1M551.5 461.2L521 476M551.5 470L521 485M551.5 478.8L521 494M551.5 487.6L521 502.9M551.5 496.5L521 511.8"/><path d="M535.1 239.4L530.9 263.8L528.2 290L526 312L524 338.3L523 380L522.6 420L522 490L551.5 490L551.5 243.5L541.5 246.4Z"/><clipPath id="c7"><path d="M558.6 490L558.6 240L558.6 225L560.6 218L570.2 229.8L576 234.5L582 238.3L587.2 259.6L591 280L594.4 300L597.9 338.3L599.6 380L600.6 420L601 490Z"/></clipPath><path d="M558.6 490L558.6 240L558.6 225L560.6 218L570.2 229.8L576 234.5L582 238.3L587.2 259.6L591 280L594.4 300L597.9 338.3L599.6 380L600.6 420L601 490Z" fill="#fff" stroke="none"/><path clip-path="url(#c7)" d="M558.6 240.4L603 260.4M558.6 248.7L603 268.9M558.6 257L603 277.5M558.6 265.4L603 286.1M558.6 273.8L603 294.8M558.6 282.2L603 303.4M558.6 290.6L603 312.1M558.6 299.1L603 320.8M558.6 307.6L603 329.5M558.6 316.1L603 338.3M558.6 324.6L603 347.1M558.6 333.2L603 355.9M558.6 341.7L603 364.7M558.6 350.3L603 373.6M558.6 359L603 382.5M558.6 367.6L603 391.4M558.6 376.3L603 400.3M558.6 385L603 409.2M558.6 393.7L603 418.2M558.6 402.4L603 427.2M558.6 411.2L603 436.2M558.6 420L603 445.3M558.6 428.8L603 454.4M558.6 437.6L603 463.5M558.6 446.5L603 472.6M558.6 455.4L603 481.8M558.6 464.3L603 490.9M558.6 473.2L603 500.1M558.6 482.2L603 509.3M558.6 491.2L603 518.3"/><path d="M558.6 490L558.6 240L558.6 225L560.6 218L570.2 229.8L576 234.5L582 238.3L587.2 259.6L591 280L594.4 300L597.9 338.3L599.6 380L600.6 420L601 490Z"/><path d="M551.5 490V222C551.5 217.5 555 215.6 558.6 216.5L560.6 218L558.6 219.5V490" fill="#fff"/><path d="M616.2 540.7V345.7L625.7 344.3L629.3 341L632.6 335.8V540.7Z" fill="#fff"/><path d="M625.7 344.3V540.7"/><clipPath id="c8"><path d="M632.6 333.3L635.3 335.7L638 337.9L640.7 340L643.4 342L646.1 343.9L648.8 345.7L651.5 347.4L654.2 348.9L656.9 350.4L659.6 351.7L662.3 352.9L665 353.9L667.7 354.9L670.4 355.8L673.1 356.5L675.8 357.1L678.5 357.6L681.2 358L683.9 358.3L686.7 358.5L689.4 358.5L692.1 358.4L694.8 358.3L697.5 358.1L700.2 357.8L702.9 357.4L705.6 357L708.3 356.5L711 355.8L713.7 355.2L716.4 354.4L719.1 353.5L721.8 352.6L724.5 351.6L727.2 350.5L729.9 349.3L732.6 348L735.3 346.7L738 345.3L740.7 343.8L740.7 540.7L710.6 540.7L710.6 394.7L708.3 395L705.6 395.4L702.9 395.7L700.2 396L697.5 396.2L694.8 396.3L692.1 396.4L689.4 396.4L686.7 396.4L683.9 396.3L681.2 396.1L678.5 395.8L675.8 395.4L675 395.3L675 540.7L632.6 540.7Z"/></clipPath><path d="M632.6 333.3L635.3 335.7L638 337.9L640.7 340L643.4 342L646.1 343.9L648.8 345.7L651.5 347.4L654.2 348.9L656.9 350.4L659.6 351.7L662.3 352.9L665 353.9L667.7 354.9L670.4 355.8L673.1 356.5L675.8 357.1L678.5 357.6L681.2 358L683.9 358.3L686.7 358.5L689.4 358.5L692.1 358.4L694.8 358.3L697.5 358.1L700.2 357.8L702.9 357.4L705.6 357L708.3 356.5L711 355.8L713.7 355.2L716.4 354.4L719.1 353.5L721.8 352.6L724.5 351.6L727.2 350.5L729.9 349.3L732.6 348L735.3 346.7L738 345.3L740.7 343.8L740.7 540.7L710.6 540.7L710.6 394.7L708.3 395L705.6 395.4L702.9 395.7L700.2 396L697.5 396.2L694.8 396.3L692.1 396.4L689.4 396.4L686.7 396.4L683.9 396.3L681.2 396.1L678.5 395.8L675.8 395.4L675 395.3L675 540.7L632.6 540.7Z" fill="#fff" stroke="none"/><path clip-path="url(#c8)" d="M632.6 348.1L635.3 350.3L638 352.3L640.7 354.3L643.4 356.1L646.1 357.8L648.8 359.5L651.5 361L654.2 362.4L656.9 363.7L659.6 364.9L662.3 366L665 367L667.7 367.9L670.4 368.7L673.1 369.3L675.8 369.9L678.5 370.4L681.2 370.7L683.9 371L686.7 371.1L689.4 371.1L692.1 371.1L694.8 371L697.5 370.8L700.2 370.5L702.9 370.2L705.6 369.8L708.3 369.3L711 368.8L713.7 368.1L716.4 367.4L719.1 366.7L721.8 365.8L724.5 364.9L727.2 363.9L729.9 362.9L732.6 361.8L735.3 360.6L738 359.3L740.7 357.9M632.6 362.9L635.3 364.9L638 366.7L640.7 368.5L643.4 370.1L646.1 371.7L648.8 373.2L651.5 374.6L654.2 375.9L656.9 377L659.6 378.1L662.3 379.1L665 380L667.7 380.8L670.4 381.5L673.1 382.1L675.8 382.7L678.5 383.1L681.2 383.4L683.9 383.6L686.7 383.8L689.4 383.8L692.1 383.8L694.8 383.7L697.5 383.5L700.2 383.3L702.9 383L705.6 382.6L708.3 382.2L711 381.7L713.7 381.1L716.4 380.5L719.1 379.8L721.8 379.1L724.5 378.3L727.2 377.4L729.9 376.5L732.6 375.5L735.3 374.4L738 373.3L740.7 372.1M632.6 377.7L635.3 379.5L638 381.1L640.7 382.7L643.4 384.2L646.1 385.6L648.8 386.9L651.5 388.2L654.2 389.3L656.9 390.4L659.6 391.4L662.3 392.3L665 393.1L667.7 393.8L670.4 394.4L673.1 395L675.8 395.4L678.5 395.8L681.2 396.1L683.9 396.3L686.7 396.4L689.4 396.4L692.1 396.4L694.8 396.3L697.5 396.2L700.2 396L702.9 395.7L705.6 395.4L708.3 395L711 394.6L713.7 394.1L716.4 393.6L719.1 393L721.8 392.3L724.5 391.6L727.2 390.9L729.9 390.1L732.6 389.2L735.3 388.3L738 387.3L740.7 386.2M632.6 392.5L635.3 394.1L638 395.5L640.7 396.9L643.4 398.3L646.1 399.5L648.8 400.7L651.5 401.8L654.2 402.8L656.9 403.7L659.6 404.6L662.3 405.4L665 406.1L667.7 406.7L670.4 407.3L673.1 407.8L675.8 408.2L678.5 408.5L681.2 408.8L683.9 409L686.7 409.1L689.4 409.1L692.1 409.1L694.8 409L697.5 408.9L700.2 408.7L702.9 408.5L705.6 408.2L708.3 407.9L711 407.5L713.7 407.1L716.4 406.7L719.1 406.2L721.8 405.6L724.5 405L727.2 404.3L729.9 403.6L732.6 402.9L735.3 402.1L738 401.3L740.7 400.4M632.6 407.3L635.3 408.7L638 409.9L640.7 411.2L643.4 412.3L646.1 413.4L648.8 414.4L651.5 415.4L654.2 416.3L656.9 417.1L659.6 417.8L662.3 418.5L665 419.1L667.7 419.7L670.4 420.2L673.1 420.6L675.8 421L678.5 421.3L681.2 421.5L683.9 421.6L686.7 421.7L689.4 421.7L692.1 421.7L694.8 421.7L697.5 421.6L700.2 421.4L702.9 421.2L705.6 421L708.3 420.7L711 420.4L713.7 420.1L716.4 419.7L719.1 419.3L721.8 418.8L724.5 418.4L727.2 417.8L729.9 417.2L732.6 416.6L735.3 416L738 415.3L740.7 414.5M632.6 422.1L635.3 423.3L638 424.4L640.7 425.4L643.4 426.4L646.1 427.3L648.8 428.2L651.5 429L654.2 429.7L656.9 430.4L659.6 431.1L662.3 431.7L665 432.2L667.7 432.7L670.4 433.1L673.1 433.4L675.8 433.7L678.5 434L681.2 434.2L683.9 434.3L686.7 434.4L689.4 434.4L692.1 434.4L694.8 434.3L697.5 434.2L700.2 434.1L702.9 434L705.6 433.8L708.3 433.6L711 433.4L713.7 433.1L716.4 432.8L719.1 432.5L721.8 432.1L724.5 431.7L727.2 431.3L729.9 430.8L732.6 430.3L735.3 429.8L738 429.3L740.7 428.7M632.6 436.9L635.3 437.9L638 438.8L640.7 439.6L643.4 440.4L646.1 441.2L648.8 441.9L651.5 442.6L654.2 443.2L656.9 443.8L659.6 444.3L662.3 444.8L665 445.2L667.7 445.6L670.4 446L673.1 446.2L675.8 446.5L678.5 446.7L681.2 446.9L683.9 447L686.7 447L689.4 447L692.1 447L694.8 447L697.5 446.9L700.2 446.9L702.9 446.7L705.6 446.6L708.3 446.5L711 446.3L713.7 446.1L716.4 445.9L719.1 445.6L721.8 445.4L724.5 445.1L727.2 444.7L729.9 444.4L732.6 444L735.3 443.7L738 443.3L740.7 442.8M632.6 451.7L635.3 452.5L638 453.2L640.7 453.8L643.4 454.5L646.1 455.1L648.8 455.6L651.5 456.2L654.2 456.7L656.9 457.1L659.6 457.5L662.3 457.9L665 458.3L667.7 458.6L670.4 458.8L673.1 459.1L675.8 459.3L678.5 459.4L681.2 459.5L683.9 459.6L686.7 459.7L689.4 459.7L692.1 459.7L694.8 459.7L697.5 459.6L700.2 459.6L702.9 459.5L705.6 459.4L708.3 459.3L711 459.2L713.7 459.1L716.4 458.9L719.1 458.8L721.8 458.6L724.5 458.4L727.2 458.2L729.9 458L732.6 457.8L735.3 457.5L738 457.3L740.7 457M632.6 466.5L635.3 467.1L638 467.6L640.7 468.1L643.4 468.5L646.1 469L648.8 469.4L651.5 469.8L654.2 470.1L656.9 470.5L659.6 470.8L662.3 471L665 471.3L667.7 471.5L670.4 471.7L673.1 471.9L675.8 472L678.5 472.1L681.2 472.2L683.9 472.3L686.7 472.3L689.4 472.3L692.1 472.3L694.8 472.3L697.5 472.3L700.2 472.3L702.9 472.3L705.6 472.2L708.3 472.2L711 472.1L713.7 472.1L716.4 472L719.1 471.9L721.8 471.9L724.5 471.8L727.2 471.7L729.9 471.6L732.6 471.5L735.3 471.4L738 471.2L740.7 471.1M632.6 481.3L635.3 481.7L638 482L640.7 482.3L643.4 482.6L646.1 482.9L648.8 483.1L651.5 483.4L654.2 483.6L656.9 483.8L659.6 484L662.3 484.2L665 484.3L667.7 484.5L670.4 484.6L673.1 484.7L675.8 484.8L678.5 484.9L681.2 484.9L683.9 485L686.7 485L689.4 485L692.1 485L694.8 485L697.5 485L700.2 485L702.9 485L705.6 485L708.3 485L711 485L713.7 485.1L716.4 485.1L719.1 485.1L721.8 485.1L724.5 485.1L727.2 485.1L729.9 485.2L732.6 485.2L735.3 485.2L738 485.2L740.7 485.3M632.6 496.1L635.3 496.3L638 496.4L640.7 496.5L643.4 496.6L646.1 496.8L648.8 496.9L651.5 497L654.2 497.1L656.9 497.2L659.6 497.2L662.3 497.3L665 497.4L667.7 497.4L670.4 497.5L673.1 497.5L675.8 497.6L678.5 497.6L681.2 497.6L683.9 497.6L686.7 497.6L689.4 497.7L692.1 497.7L694.8 497.7L697.5 497.7L700.2 497.7L702.9 497.8L705.6 497.8L708.3 497.9L711 498L713.7 498.1L716.4 498.1L719.1 498.2L721.8 498.4L724.5 498.5L727.2 498.6L729.9 498.8L732.6 498.9L735.3 499.1L738 499.2L740.7 499.4M632.6 510.9L635.3 510.9L638 510.8L640.7 510.7L643.4 510.7L646.1 510.7L648.8 510.6L651.5 510.6L654.2 510.5L656.9 510.5L659.6 510.5L662.3 510.4L665 510.4L667.7 510.4L670.4 510.4L673.1 510.3L675.8 510.3L678.5 510.3L681.2 510.3L683.9 510.3L686.7 510.3L689.4 510.3L692.1 510.3L694.8 510.3L697.5 510.4L700.2 510.5L702.9 510.5L705.6 510.6L708.3 510.8L711 510.9L713.7 511L716.4 511.2L719.1 511.4L721.8 511.6L724.5 511.8L727.2 512.1L729.9 512.3L732.6 512.6L735.3 512.9L738 513.2L740.7 513.6M632.6 525.7L635.3 525.5L638 525.2L640.7 525L643.4 524.8L646.1 524.5L648.8 524.4L651.5 524.2L654.2 524L656.9 523.8L659.6 523.7L662.3 523.6L665 523.4L667.7 523.3L670.4 523.2L673.1 523.2L675.8 523.1L678.5 523L681.2 523L683.9 523L686.7 523L689.4 523L692.1 523L694.8 523L697.5 523.1L700.2 523.2L702.9 523.3L705.6 523.4L708.3 523.6L711 523.8L713.7 524L716.4 524.3L719.1 524.6L721.8 524.9L724.5 525.2L727.2 525.5L729.9 525.9L732.6 526.3L735.3 526.8L738 527.2L740.7 527.7M632.6 540.5L635.3 540.1L638 539.6L640.7 539.2L643.4 538.8L646.1 538.4L648.8 538.1L651.5 537.8L654.2 537.5L656.9 537.2L659.6 536.9L662.3 536.7L665 536.5L667.7 536.3L670.4 536.1L673.1 536L675.8 535.9L678.5 535.8L681.2 535.7L683.9 535.6L686.7 535.6L689.4 535.6L692.1 535.6L694.8 535.7L697.5 535.8L700.2 535.9L702.9 536L705.6 536.2L708.3 536.5L711 536.7L713.7 537L716.4 537.4L719.1 537.7L721.8 538.1L724.5 538.5L727.2 539L729.9 539.5L732.6 540L735.3 540.6L738 541.2L740.7 541.9M641.5 340.6V540.7M650.4 346.7V540.7M658.9 351.3V540.7M667.2 354.7V540.7M675 356.9V540.7M684 358.3V540.7M692.8 358.4V540.7M702.7 357.5V540.7M710.6 355.9V540.7M718.5 353.7V540.7M726.4 350.8V540.7M734.3 347.2V540.7"/><path d="M632.6 333.3L635.3 335.7L638 337.9L640.7 340L643.4 342L646.1 343.9L648.8 345.7L651.5 347.4L654.2 348.9L656.9 350.4L659.6 351.7L662.3 352.9L665 353.9L667.7 354.9L670.4 355.8L673.1 356.5L675.8 357.1L678.5 357.6L681.2 358L683.9 358.3L686.7 358.5L689.4 358.5L692.1 358.4L694.8 358.3L697.5 358.1L700.2 357.8L702.9 357.4L705.6 357L708.3 356.5L711 355.8L713.7 355.2L716.4 354.4L719.1 353.5L721.8 352.6L724.5 351.6L727.2 350.5L729.9 349.3L732.6 348L735.3 346.7L738 345.3L740.7 343.8M632.6 333.3V540.7M675 540.7L675 395.3L675.8 395.4L678.5 395.8L681.2 396.1L683.9 396.3L686.7 396.4L689.4 396.4L692.1 396.4L694.8 396.3L697.5 396.2L700.2 396L702.9 395.7L705.6 395.4L708.3 395L710.6 394.7L710.6 540.7"/><clipPath id="c9"><path d="M720.4 487.7L741 477.4L741 540.7L720.4 540.7Z"/></clipPath><path d="M720.4 487.7L741 477.4L741 540.7L720.4 540.7Z" fill="#fff" stroke="none"/><path clip-path="url(#c9)" d="M720.4 490.3L741 480M720.4 495L741 484.7M720.4 499.7L741 489.4M720.4 504.4L741 494.1M720.4 509.1L741 498.8M720.4 513.8L741 503.5M720.4 518.5L741 508.2M720.4 523.2L741 512.9M720.4 527.9L741 517.6M720.4 532.6L741 522.3M720.4 537.3L741 527M720.4 542L741 531.7M720.4 546.7L741 536.4M720.4 551.4L741 541.1M720.4 556.1L741 545.8M720.4 560.8L741 550.5M720.4 565.5L741 555.2M720.4 570.2L741 559.9M725.5 470V540.7M730.6 470V540.7M735.7 470V540.7M740.8 470V540.7" stroke-width="1.1"/><path d="M741 477.4L720.4 487.7L720.4 540.7"/><clipPath id="c10"><path d="M555.4 484L562.9 472.2L576.2 471L631 474.1C637 476 641.5 481 643.7 490.6L555.4 490.6Z"/></clipPath><path d="M555.4 484L562.9 472.2L576.2 471L631 474.1C637 476 641.5 481 643.7 490.6L555.4 490.6Z" fill="#fff" stroke="none"/><path clip-path="url(#c10)" d="M568.7 484L576.2 472.5M580.4 484L588 473M606 480.5L642 485.3M588 473L631 475.2"/><path d="M555.4 484L562.9 472.2L576.2 471L631 474.1C637 476 641.5 481 643.7 490.6L555.4 490.6Z"/><clipPath id="c11"><path d="M576.2 471L586.8 448.1L613.4 449.7C622 453.5 628 462 631 474.1Z"/></clipPath><path d="M576.2 471L586.8 448.1L613.4 449.7C622 453.5 628 462 631 474.1Z" fill="#fff" stroke="none"/><path clip-path="url(#c11)" d="M583 454.7C598 453.8 610 454 621 455.5M579 463C598 462 614 462.3 628 463.6M577 470.2C598 469.3 614 469.6 631 471.5"/><path d="M576.2 471L586.8 448.1L613.4 449.7C622 453.5 628 462 631 474.1Z"/><clipPath id="c12"><path d="M463.8 488.5L467.9 488.2L472 487.9L476.1 487.5L480.2 487.2L484.3 486.9L488.4 486.6L492.5 486.3L496.5 486L500.6 485.6L504.7 485.3L508.8 485L512.9 484.9L517 484.8L521.1 484.8L525.2 484.7L529.3 484.7L533.4 484.6L537.5 484.6L541.6 484.5L545.7 484.4L549.8 484.4L553.9 484.3L557.9 484.4L562 484.6L566.1 484.8L570.2 485L574.3 485.2L578.4 485.5L582.5 485.7L586.6 485.9L590.7 486.1L594.8 486.3L598.9 486.6L603 486.8L607.1 487L611.2 487.2L615.3 487.4L619.3 487.7L623.4 488.4L627.5 489.2L631.6 489.9L635.7 490.7L639.8 491.5L643.9 492.3L648 492.9L652.1 493.4L656.2 493.9L660.3 494.5L664.4 495L668.5 495.5L672.6 496.1L676.7 496.6L680.7 497.1L684.8 497.7L688.9 498.2L693 498.8L697.1 499.3L701.2 499.8L705.3 500.4L709.4 500.9L690.6 540.7L479.4 540.7Z"/></clipPath><path d="M463.8 488.5L467.9 488.2L472 487.9L476.1 487.5L480.2 487.2L484.3 486.9L488.4 486.6L492.5 486.3L496.5 486L500.6 485.6L504.7 485.3L508.8 485L512.9 484.9L517 484.8L521.1 484.8L525.2 484.7L529.3 484.7L533.4 484.6L537.5 484.6L541.6 484.5L545.7 484.4L549.8 484.4L553.9 484.3L557.9 484.4L562 484.6L566.1 484.8L570.2 485L574.3 485.2L578.4 485.5L582.5 485.7L586.6 485.9L590.7 486.1L594.8 486.3L598.9 486.6L603 486.8L607.1 487L611.2 487.2L615.3 487.4L619.3 487.7L623.4 488.4L627.5 489.2L631.6 489.9L635.7 490.7L639.8 491.5L643.9 492.3L648 492.9L652.1 493.4L656.2 493.9L660.3 494.5L664.4 495L668.5 495.5L672.6 496.1L676.7 496.6L680.7 497.1L684.8 497.7L688.9 498.2L693 498.8L697.1 499.3L701.2 499.8L705.3 500.4L709.4 500.9L690.6 540.7L479.4 540.7Z" fill="#fff" stroke="none"/><path clip-path="url(#c12)" d="M463.8 494L467.9 493.7L472 493.4L476.1 493.1L480.2 492.8L484.3 492.5L488.4 492.2L492.5 491.9L496.5 491.6L500.6 491.3L504.7 491L508.8 490.7L512.9 490.6L517 490.6L521.1 490.5L525.2 490.5L529.3 490.5L533.4 490.4L537.5 490.4L541.6 490.4L545.7 490.3L549.8 490.3L553.9 490.3L557.9 490.3L562 490.6L566.1 490.8L570.2 491L574.3 491.3L578.4 491.5L582.5 491.8L586.6 492L590.7 492.2L594.8 492.5L598.9 492.7L603 493L607.1 493.2L611.2 493.4L615.3 493.7L619.3 493.9L623.4 494.6L627.5 495.5L631.6 496.3L635.7 497.1L639.8 497.9L643.9 498.7L648 499.3L652.1 499.8L656.2 500.4L660.3 500.9L664.4 501.5L668.5 502L672.6 502.6L676.7 503.1L680.7 503.7L684.8 504.3L688.9 504.8L693 505.4L697.1 505.9L701.2 506.5L705.3 507L709.4 507.6M463.8 499.5L467.9 499.2L472 498.9L476.1 498.7L480.2 498.4L484.3 498.1L488.4 497.8L492.5 497.6L496.5 497.3L500.6 497L504.7 496.7L508.8 496.4L512.9 496.3L517 496.3L521.1 496.3L525.2 496.3L529.3 496.3L533.4 496.3L537.5 496.3L541.6 496.3L545.7 496.2L549.8 496.2L553.9 496.2L557.9 496.3L562 496.5L566.1 496.8L570.2 497.1L574.3 497.3L578.4 497.6L582.5 497.8L586.6 498.1L590.7 498.4L594.8 498.6L598.9 498.9L603 499.1L607.1 499.4L611.2 499.7L615.3 499.9L619.3 500.2L623.4 500.9L627.5 501.8L631.6 502.6L635.7 503.4L639.8 504.3L643.9 505.1L648 505.7L652.1 506.2L656.2 506.8L660.3 507.4L664.4 508L668.5 508.5L672.6 509.1L676.7 509.7L680.7 510.3L684.8 510.8L688.9 511.4L693 512L697.1 512.6L701.2 513.2L705.3 513.7L709.4 514.3M463.8 505L467.9 504.7L472 504.5L476.1 504.2L480.2 504L484.3 503.7L488.4 503.5L492.5 503.2L496.5 502.9L500.6 502.7L504.7 502.4L508.8 502.2L512.9 502.1L517 502.1L521.1 502.1L525.2 502.1L529.3 502.1L533.4 502.1L537.5 502.1L541.6 502.1L545.7 502.1L549.8 502.2L553.9 502.2L557.9 502.2L562 502.5L566.1 502.8L570.2 503.1L574.3 503.4L578.4 503.6L582.5 503.9L586.6 504.2L590.7 504.5L594.8 504.8L598.9 505L603 505.3L607.1 505.6L611.2 505.9L615.3 506.2L619.3 506.4L623.4 507.2L627.5 508.1L631.6 508.9L635.7 509.8L639.8 510.6L643.9 511.5L648 512.1L652.1 512.7L656.2 513.2L660.3 513.8L664.4 514.4L668.5 515L672.6 515.6L676.7 516.2L680.7 516.8L684.8 517.4L688.9 518L693 518.6L697.1 519.2L701.2 519.8L705.3 520.4L709.4 521M463.8 510.5L467.9 510.3L472 510L476.1 509.8L480.2 509.5L484.3 509.3L488.4 509.1L492.5 508.8L496.5 508.6L500.6 508.4L504.7 508.1L508.8 507.9L512.9 507.8L517 507.9L521.1 507.9L525.2 507.9L529.3 507.9L533.4 508L537.5 508L541.6 508L545.7 508L549.8 508.1L553.9 508.1L557.9 508.2L562 508.5L566.1 508.8L570.2 509.1L574.3 509.4L578.4 509.7L582.5 510L586.6 510.3L590.7 510.6L594.8 510.9L598.9 511.2L603 511.5L607.1 511.8L611.2 512.1L615.3 512.4L619.3 512.7L623.4 513.5L627.5 514.4L631.6 515.2L635.7 516.1L639.8 517L643.9 517.8L648 518.5L652.1 519.1L656.2 519.7L660.3 520.3L664.4 520.9L668.5 521.5L672.6 522.2L676.7 522.8L680.7 523.4L684.8 524L688.9 524.6L693 525.2L697.1 525.9L701.2 526.5L705.3 527.1L709.4 527.7M463.8 516L467.9 515.8L472 515.6L476.1 515.3L480.2 515.1L484.3 514.9L488.4 514.7L492.5 514.5L496.5 514.3L500.6 514L504.7 513.8L508.8 513.6L512.9 513.6L517 513.6L521.1 513.7L525.2 513.7L529.3 513.8L533.4 513.8L537.5 513.8L541.6 513.9L545.7 513.9L549.8 514L553.9 514L557.9 514.2L562 514.5L566.1 514.8L570.2 515.1L574.3 515.4L578.4 515.8L582.5 516.1L586.6 516.4L590.7 516.7L594.8 517L598.9 517.4L603 517.7L607.1 518L611.2 518.3L615.3 518.6L619.3 519L623.4 519.8L627.5 520.7L631.6 521.6L635.7 522.4L639.8 523.3L643.9 524.2L648 524.9L652.1 525.5M463.8 521.5L467.9 521.3L472 521.1L476.1 520.9L480.2 520.7L484.3 520.5L488.4 520.3L492.5 520.1L496.5 519.9L500.6 519.7L504.7 519.5L508.8 519.3L512.9 519.3L517 519.4L521.1 519.4L525.2 519.5L529.3 519.6L533.4 519.6L537.5 519.7L541.6 519.8L545.7 519.8L549.8 519.9L553.9 520L557.9 520.1L562 520.5L566.1 520.8L570.2 521.1L574.3 521.5L578.4 521.8L582.5 522.2L586.6 522.5L590.7 522.8L594.8 523.2L598.9 523.5M463.8 527L467.9 526.8L472 526.6L476.1 526.5L480.2 526.3L484.3 526.1L488.4 525.9L492.5 525.8L496.5 525.6L500.6 525.4L504.7 525.2L508.8 525L512.9 525L517 525.1L521.1 525.2L525.2 525.3L529.3 525.4L533.4 525.5L537.5 525.6L541.6 525.7M463.8 532.5L467.9 532.3L472 532.2L476.1 532L480.2 531.9L484.3 531.7L488.4 531.5M474 487.7L488.2 540.7M484.3 486.9L497 540.7M494.5 486.1L505.8 540.7M504.7 485.3L514.6 540.7M515 484.8L523.4 540.7M525.2 484.7L532.2 540.7M535.4 484.6L541 540.7M545.7 484.4L549.8 540.7M555.9 484.3L558.6 540.7M566.1 484.8L567.4 540.7M576.4 485.3L576.2 540.7M586.6 485.9L585 540.7M596.8 486.4L593.8 540.7M607.1 487L602.6 540.7M617.3 487.6L611.4 540.7M627.5 489.2L620.2 540.7M637.8 491.1L629 540.7M648 492.9L637.8 540.7M658.2 494.2L646.6 540.7M668.5 495.5L655.4 540.7M678.7 496.9L664.2 540.7M688.9 498.2L673 540.7M699.2 499.6L681.8 540.7"/><path d="M463.8 488.5L467.9 488.2L472 487.9L476.1 487.5L480.2 487.2L484.3 486.9L488.4 486.6L492.5 486.3L496.5 486L500.6 485.6L504.7 485.3L508.8 485L512.9 484.9L517 484.8L521.1 484.8L525.2 484.7L529.3 484.7L533.4 484.6L537.5 484.6L541.6 484.5L545.7 484.4L549.8 484.4L553.9 484.3L557.9 484.4L562 484.6L566.1 484.8L570.2 485L574.3 485.2L578.4 485.5L582.5 485.7L586.6 485.9L590.7 486.1L594.8 486.3L598.9 486.6L603 486.8L607.1 487L611.2 487.2L615.3 487.4L619.3 487.7L623.4 488.4L627.5 489.2L631.6 489.9L635.7 490.7L639.8 491.5L643.9 492.3L648 492.9L652.1 493.4L656.2 493.9L660.3 494.5L664.4 495L668.5 495.5L672.6 496.1L676.7 496.6L680.7 497.1L684.8 497.7L688.9 498.2L693 498.8L697.1 499.3L701.2 499.8L705.3 500.4L709.4 500.9L690.6 540.7L479.4 540.7Z"/><path d="M298.5 540.7H741" stroke-width="1.3"/><g stroke="none" fill="#000"><rect x="517.3" y="121" width="4.7" height="4.6"/><rect x="741.2" y="121" width="4.7" height="4.6"/><rect x="293.7" y="436.4" width="4.7" height="4.6"/><rect x="741.3" y="436.4" width="4.7" height="4.6"/></g><rect x="293.3" y="121" width="9" height="8.6" rx="1" fill="#2fd52f" stroke="none"/><path d="M519.6 121V112.5" stroke="#333" stroke-width="0.9"/><path d="M521.9 106.4a3.3 3.3 0 1 0 .9 2.8M520.6 104.6l1.6 1.8l-2.2 .7" stroke="#333" stroke-width="0.8"/><path d="M515.6 435.6l5.6 5.8M521.2 435.6l-5.6 5.8" stroke="#8a8a8a" stroke-width="0.8"/></svg><div class="p" style="left:0;top:621.5px;width:146.5px;height:34px;border-radius:0 9px 9px 0"></div><div class="a" style="left:11px;top:631px;width:16px;height:16px;border-radius:2px;background:#000"></div><div class="a" style="left:38.8px;top:631px;width:16px;height:16px;border-radius:2px;background:#e8110f"></div><div class="a" style="left:66.2px;top:631px;width:16px;height:16px;border-radius:2px;background:#fbb117"></div><div class="a" style="left:93.6px;top:631px;width:16px;height:16px;border-radius:2px;background:#4285f0"></div><div class="a" style="left:121px;top:631px;width:16px;height:16px;border-radius:2px;background:linear-gradient(#4a8fe6 10%,#9a6fc4 50%,#ea4a66 95%)"></div><div class="p" style="left:153.5px;top:621.5px;width:132px;height:34px;border-radius:9px"></div><svg class="a" style="left:0;top:0;pointer-events:none" width="300" height="658" viewBox="0 0 300 658" fill="none" stroke-linecap="round" stroke-linejoin="round"><rect x="162.3" y="633.6" width="11.8" height="9.8" stroke="#1b739f" stroke-width="1.9" fill="#eaf9ff"/><path d="M160.3 633.5v-1.8h1.8M174.4 631.7h1.8v1.8M176.2 643.6v1.8h-1.8M162.1 645.4h-1.8v-1.8" stroke="#1b739f" stroke-width="1.3"/><path d="M194.6 634.5v-2.7h2.7M207.4 631.8h2.7v2.7M210.1 642.6v2.7h-2.7M197.3 645.3h-2.7v-2.7" stroke="#1b739f" stroke-width="1.5"/><rect x="197.4" y="634.5" width="5" height="3.6" fill="#1b739f"/><ellipse cx="200.5" cy="642.2" rx="2.6" ry="1.7" fill="#1b739f"/><path d="M204.4 639.8l1.7-4.4l1.8 4.4z" fill="#1b739f"/><g transform="rotate(-45 237.8 637.6)"><path d="M232.6 633.3H238.2A4.3 4.3 0 0 1 238.2 641.9H232.6" stroke="#1a78b8" stroke-width="4" stroke-linecap="butt"/></g><path d="M233.6 641.8l-1.8 2h2l-1.8 2.6" stroke="#1a78b8" stroke-width="1.3"/><rect x="264.2" y="632.5" width="12.5" height="12" rx="0.8" stroke="#1a78b8" stroke-width="1.9" fill="#e6f7ff"/><path d="M268.4 632.6v11.8M272.6 632.6v11.8M264.3 636.5h12.3M264.3 640.5h12.3" stroke="#1a78b8" stroke-width="1.6"/></svg><div class="p" style="left:1096px;top:5.5px;width:184px;height:316.5px;border-radius:7px 0 0 7px;overflow:hidden"></div><div class="p" style="left:1096px;top:330px;width:184px;height:322.5px;border-radius:7px 0 0 7px"></div><svg class="a" style="left:0;top:0" width="1280" height="330" viewBox="0 0 1280 330" fill="none" stroke="#3e3e3e" stroke-width="0.95" stroke-linejoin="miter"><polygon points="1102.4,75.7 1124.5,75.7 1124.5,64.6 1146.2,85.8 1124.5,107.0 1124.5,96.4 1102.4,96.4"/><polygon points="1156.3,75.0 1188.4,75.0 1199.3,85.8 1188.4,96.5 1156.3,96.5"/><polygon points="1210.0,72.5 1242.6,72.5 1253.0,85.8 1242.6,99.0 1210.0,99.0 1221.5,85.8"/><circle cx="1124.5" cy="149.4" r="21.8"/><circle cx="1124.5" cy="149.4" r="13.5"/><polygon points="1166.9,127.4 1188.8,127.4 1188.8,138.3 1200.0,138.3 1200.0,160.4 1188.8,160.4 1188.8,171.3 1166.9,171.3 1166.9,160.4 1156.2,160.4 1156.2,138.3 1166.9,138.3"/><polygon points="1227.2,145.1 1227.2,137.0 1222.9,137.0 1231.5,127.9 1240.1,137.0 1235.8,137.0 1235.8,145.1 1235.8,145.1 1243.9,145.1 1243.9,140.8 1253.0,149.4 1243.9,158.0 1243.9,153.7 1235.8,153.7 1235.8,153.7 1235.8,161.8 1240.1,161.8 1231.5,170.9 1222.9,161.8 1227.2,161.8 1227.2,153.7 1227.2,153.7 1219.1,153.7 1219.1,158.0 1210.0,149.4 1219.1,140.8 1219.1,145.1 1227.2,145.1"/><polygon points="1102.8,213.2 1111.6,204.4 1111.6,208.8 1137.4,208.8 1137.4,204.4 1146.2,213.2 1137.4,222.0 1137.4,217.6 1111.6,217.6 1111.6,222.0"/><polygon points="1177.7,192.8 1182.8,208.1 1198.9,208.2 1186.0,217.8 1190.8,233.1 1177.7,223.8 1164.6,233.1 1169.4,217.8 1156.5,208.2 1172.6,208.1"/><path d="M1231.2 232.4C1222 223.5 1209.2 214.5 1209.2 204.2C1209.2 197.4 1214.3 192.8 1220.2 192.8C1225 192.8 1229 195.4 1231.2 199.6C1233.4 195.4 1237.4 192.8 1242.2 192.8C1248.1 192.8 1253.3 197.4 1253.3 204.2C1253.3 214.5 1240.4 223.5 1231.2 232.4Z"/><path d="M1124.6 275.7L1124.7 275.8L1124.8 275.9L1124.8 276.1L1124.9 276.3L1125.0 276.5L1125.0 276.7L1125.0 276.9L1124.9 277.1L1124.9 277.3L1124.8 277.5L1124.7 277.7L1124.5 277.9L1124.3 278.1L1124.1 278.2L1123.9 278.4L1123.7 278.5L1123.4 278.6L1123.1 278.7L1122.8 278.7L1122.5 278.7L1122.2 278.7L1121.8 278.6L1121.5 278.5L1121.2 278.3L1120.9 278.1L1120.6 277.9L1120.4 277.6L1120.1 277.3L1119.9 277.0L1119.8 276.6L1119.6 276.2L1119.5 275.8L1119.5 275.4L1119.5 275.0L1119.6 274.5L1119.7 274.1L1119.8 273.7L1120.0 273.2L1120.3 272.8L1120.6 272.4L1120.9 272.1L1121.3 271.8L1121.8 271.5L1122.2 271.3L1122.7 271.1L1123.3 271.0L1123.8 270.9L1124.4 270.9L1124.9 270.9L1125.5 271.1L1126.1 271.2L1126.6 271.5L1127.1 271.8L1127.6 272.2L1128.1 272.6L1128.5 273.1L1128.8 273.6L1129.1 274.2L1129.4 274.8L1129.6 275.4L1129.7 276.1L1129.7 276.8L1129.7 277.5L1129.6 278.1L1129.4 278.8L1129.1 279.5L1128.8 280.1L1128.4 280.8L1127.9 281.3L1127.3 281.8L1126.7 282.3L1126.1 282.7L1125.3 283.0L1124.6 283.3L1123.8 283.4L1123.0 283.5L1122.2 283.5L1121.4 283.4L1120.6 283.2L1119.8 283.0L1119.0 282.6L1118.2 282.2L1117.6 281.6L1116.9 281.0L1116.3 280.3L1115.8 279.6L1115.4 278.8L1115.1 277.9L1114.8 277.1L1114.7 276.1L1114.7 275.2L1114.7 274.2L1114.9 273.3L1115.1 272.4L1115.5 271.5L1116.0 270.6L1116.5 269.8L1117.2 269.0L1117.9 268.3L1118.7 267.7L1119.6 267.2L1120.5 266.7L1121.5 266.4L1122.6 266.2L1123.6 266.1L1124.7 266.1L1125.8 266.2L1126.9 266.4L1127.9 266.8L1128.9 267.2L1129.9 267.8L1130.8 268.5L1131.6 269.3L1132.3 270.1L1133.0 271.1L1133.5 272.1L1134.0 273.2L1134.3 274.3L1134.5 275.5L1134.6 276.7L1134.5 277.9L1134.3 279.1L1134.0 280.3L1133.6 281.5L1133.0 282.6L1132.3 283.6L1131.5 284.6L1130.6 285.5L1129.6 286.2L1128.5 286.9L1127.3 287.5L1126.1 287.9L1124.8 288.2L1123.5 288.4L1122.1 288.4L1120.8 288.3L1119.5 288.0L1118.2 287.6L1116.9 287.0L1115.7 286.3L1114.6 285.5L1113.6 284.6L1112.6 283.5L1111.8 282.4L1111.1 281.1L1110.6 279.8L1110.2 278.4L1109.9 277.0L1109.8 275.5L1109.8 274.1L1110.0 272.6L1110.4 271.2L1110.9 269.8L1111.6 268.4L1112.4 267.1L1113.4 266.0L1114.4 264.9L1115.6 263.9L1116.9 263.1L1118.3 262.4L1119.8 261.8L1121.3 261.4L1122.9 261.2L1124.5 261.2L1126.1 261.3L1127.7 261.6L1129.2 262.0L1130.7 262.7L1132.2 263.5L1133.5 264.4L1134.7 265.5L1135.9 266.7L1136.9 268.1L1137.7 269.5L1138.4 271.1L1138.9 272.7L1139.3 274.4L1139.4 276.1L1139.4 277.8L1139.2 279.5L1138.8 281.2L1138.2 282.9L1137.5 284.5L1136.6 286.0L1135.5 287.4L1134.2 288.7L1132.9 289.9L1131.4 290.9L1129.8 291.7L1128.1 292.4L1126.3 292.9L1124.5 293.2L1122.6 293.3L1120.8 293.2L1118.9 292.9L1117.1 292.4L1115.4 291.7L1113.7 290.8L1112.1 289.7L1110.6 288.5L1109.3 287.1L1108.1 285.6L1107.1 283.9L1106.3 282.2L1105.6 280.3L1105.2 278.4L1105.0 276.4L1104.9 274.4L1105.1 272.5L1105.5 270.5L1106.1 268.6L1107.0 266.7L1108.0 265.0L1109.2 263.3L1110.6 261.8L1112.1 260.5L1113.8 259.3L1115.6 258.3L1117.5 257.5L1119.5 256.9L1121.6 256.5L1123.7 256.3L1125.8 256.4L1127.9 256.7L1130.0 257.2L1132.0 257.9L1134.0 258.9L1135.8 260.0L1137.5 261.4L1139.0 262.9L1140.4 264.6L1141.6 266.5L1142.6 268.5L1143.4 270.5L1143.9 272.7L1144.2 274.9L1144.3 277.2L1144.2 279.4L1143.8 281.6L1143.1 283.8"/><polygon points="1177.7,254.8 1182.9,266.9 1195.8,265.5 1188.1,276.1 1195.8,286.8 1182.9,285.3 1177.7,297.4 1172.5,285.3 1159.6,286.8 1167.3,276.1 1159.6,265.5 1172.5,266.9"/><polygon points="1222.2,256.6 1253.0,256.6 1239.8,295.2 1209.4,295.2"/><path d="M1113 322c4-3.2 14-3.2 18.5 0M1227 322c2.5-2.6 6.5-2.6 9 0"/></svg><svg class="a" style="left:1168px;top:8px" width="34" height="26" viewBox="1168 8 34 26" fill="none" stroke="#1c6f93" stroke-linejoin="round" stroke-linecap="round"><rect x="1177.6" y="12.9" width="13.7" height="10.7" rx="0.8" stroke-width="1.8" fill="#e6f8ff"/><path d="M1178.3 22l3.6-3.8l2.7 1.8l5.4-6" stroke-width="1.5"/><circle cx="1180.5" cy="15.8" r="0.9" fill="#1c6f93" stroke="none"/><path d="M1171 28.9H1198" stroke-width="2.2" stroke-linecap="butt"/></svg><div class="a" style="left:1102px;top:41px;width:169px;height:19px;box-sizing:border-box;border:1px solid #8a8a8a;border-radius:4px;background:#fff"></div><svg class="t" style="left:1105.60px;top:45.20px" width="48.17" height="11.76" viewBox="0 0 4915 1200" fill="#111" ><text x="0" y="880" font-weight="bold">1.基本图形</text></svg><svg class="a" style="left:1260px;top:48px" width="7" height="5" viewBox="0 0 7 5"><path d="M0 0.3h6.4L3.2 4.4z" fill="#111"/></svg><div class="a" style="left:1273px;top:62px;width:3px;height:117px;border-radius:2px;background:#d2d2d2"></div><svg class="t" style="left:1116.30px;top:113.90px" width="16.40" height="9.84" viewBox="0 0 2000 1200" fill="#222" ><text x="0" y="880" font-weight="bold">箭头</text></svg><svg class="t" style="left:1167.38px;top:113.90px" width="21.24" height="9.84" viewBox="0 0 2590 1200" fill="#222" ><text x="0" y="880" font-weight="bold">箭头1</text></svg><svg class="t" style="left:1220.88px;top:113.90px" width="21.24" height="9.84" viewBox="0 0 2590 1200" fill="#222" ><text x="0" y="880" font-weight="bold">箭头2</text></svg><svg class="t" style="left:1112.20px;top:178.10px" width="24.60" height="9.84" viewBox="0 0 3000 1200" fill="#222" ><text x="0" y="880" font-weight="bold">同心圆</text></svg><svg class="t" style="left:1169.80px;top:178.10px" width="16.40" height="9.84" viewBox="0 0 2000 1200" fill="#222" ><text x="0" y="880" font-weight="bold">十字</text></svg><svg class="t" style="left:1215.10px;top:178.10px" width="32.80" height="9.84" viewBox="0 0 4000 1200" fill="#222" ><text x="0" y="880" font-weight="bold">十字箭头</text></svg><svg class="t" style="left:1112.00px;top:240.60px" width="24.60" height="9.84" viewBox="0 0 3000 1200" fill="#222" ><text x="0" y="880" font-weight="bold">双箭头</text></svg><svg class="t" style="left:1165.70px;top:240.60px" width="24.60" height="9.84" viewBox="0 0 3000 1200" fill="#222" ><text x="0" y="880" font-weight="bold">五角星</text></svg><svg class="t" style="left:1223.00px;top:240.60px" width="16.40" height="9.84" viewBox="0 0 2000 1200" fill="#222" ><text x="0" y="880" font-weight="bold">心形</text></svg><svg class="t" style="left:1112.00px;top:304.40px" width="24.60" height="9.84" viewBox="0 0 3000 1200" fill="#222" ><text x="0" y="880" font-weight="bold">螺旋线</text></svg><svg class="t" style="left:1165.70px;top:304.40px" width="24.60" height="9.84" viewBox="0 0 3000 1200" fill="#222" ><text x="0" y="880" font-weight="bold">六角星</text></svg><svg class="t" style="left:1210.70px;top:304.40px" width="41.00" height="9.84" viewBox="0 0 5000 1200" fill="#222" ><text x="0" y="880" font-weight="bold">平行四边形</text></svg><div class="a" style="left:1101px;top:336px;width:175px;height:26.3px;background:#1583cb;border-radius:3px 3px 0 0"></div><div class="a" style="left:1101px;top:362.3px;width:175px;height:26.2px;background:#dcdcdc"></div><svg class="t" style="left:1103.20px;top:344.70px" width="39.60" height="11.88" viewBox="0 0 4000 1200" fill="#fff" ><text x="0" y="880" font-weight="bold">加工工艺</text></svg><svg class="t" style="left:1157.30px;top:344.70px" width="19.80" height="11.88" viewBox="0 0 2000 1200" fill="#fff" ><text x="0" y="880" font-weight="bold">速度</text></svg><svg class="t" style="left:1200.40px;top:344.70px" width="19.80" height="11.88" viewBox="0 0 2000 1200" fill="#fff" ><text x="0" y="880" font-weight="bold">功率</text></svg><svg class="t" style="left:1244.20px;top:344.70px" width="19.80" height="11.88" viewBox="0 0 2000 1200" fill="#fff" ><text x="0" y="880" font-weight="bold">输出</text></svg><div class="a" style="left:1103px;top:370px;width:12px;height:12px;border-radius:1.5px;background:#000"></div><svg class="t" style="left:1119.50px;top:370.80px" width="19.20" height="11.52" viewBox="0 0 2000 1200" fill="#111" ><text x="0" y="880" font-weight="500">图片</text></svg><div class="a" style="left:1153.3px;top:369.5px;font-size:10.8px;line-height:13px;color:#666;-webkit-text-stroke:0.2px #666;letter-spacing:0.1px">500.0</div><div class="a" style="left:1200px;top:369.5px;font-size:10.8px;line-height:13px;color:#666;-webkit-text-stroke:0.2px #666;letter-spacing:0.1px">20.0</div><svg class="a" style="left:0;top:0;pointer-events:none" width="1280" height="658" viewBox="0 0 1280 658" fill="none" stroke-linecap="round" stroke-linejoin="round"><path d="M1247 375.6c3.6-6 11-6 14.6 0c-3.6 6-11 6-14.6 0z" stroke="#111" stroke-width="1.3"/><circle cx="1254.3" cy="375.6" r="2.8" stroke="#111" stroke-width="1.3"/></svg><div class="a" style="left:1141.4px;top:529.4px;width:86px;height:86px;box-sizing:border-box;border-radius:50%;border:2.6px solid #1c6fa3;background:#e2f6ff"></div><div class="a" style="left:1146.6px;top:534.6px;width:75.6px;height:75.6px;border-radius:50%;background:#1580c7"></div><svg class="t" style="left:1165.10px;top:562.40px" width="38.60" height="23.16" viewBox="0 0 2000 1200" fill="#fff" ><text x="0" y="880" font-weight="500">开始</text></svg><div class="a" style="left:1102px;top:628.5px;width:172px;height:19px;background:#d9d9d9;border-radius:3px"></div><div class="a" style="left:1102px;top:628.5px;width:128px;height:19px;box-sizing:border-box;border:1px solid #c4c4c4;border-radius:3px;background:#fff"></div><svg class="a" style="left:1144.5px;top:632.3px" width="11.4" height="11.4" viewBox="0 0 12 12"><circle cx="6" cy="6" r="5" fill="none" stroke="#f0913a" stroke-width="1.1"/><path d="M4 4l4 4M8 4l-4 4" stroke="#f0913a" stroke-width="1.1"/></svg><svg class="t" style="left:1160.00px;top:633.10px" width="28.80" height="11.52" viewBox="0 0 3000 1200" fill="#f29a48" ><text x="0" y="880" font-weight="normal">未连接</text></svg><svg class="t" style="left:1241.70px;top:633.00px" width="19.60" height="11.76" viewBox="0 0 2000 1200" fill="#111" ><text x="0" y="880" font-weight="bold">切换</text></svg><div class="a" style="left:757.5px;top:125.5px;width:32.5px;height:77px;box-sizing:border-box;border:1px solid #f5f5f5;border-radius:7px;background:#fff;box-shadow:0 0 2px rgba(0,0,0,0.05)"></div><svg class="a" style="left:0;top:0;pointer-events:none" width="1280" height="658" viewBox="0 0 1280 658" fill="none" stroke-linecap="round" stroke-linejoin="round"><rect x="765.6" y="137.6" width="14.8" height="10.5" rx="0.8" stroke="#1d7896" stroke-width="1.3"/><circle cx="769.3" cy="140.8" r="1.2" stroke="#1d7896" stroke-width="1"/><path d="M768 146.2l2.8-2.4l2.2 1.8l2.2-.2l4-3.6" stroke="#1d7896" stroke-width="1.2"/><rect x="757.7" y="152.6" width="31.8" height="20.2" stroke="#c43a33" stroke-width="1.5" stroke-linejoin="miter"/><rect x="765.7" y="158.4" width="15" height="11.2" stroke="#1a78b8" stroke-width="1.3" stroke-dasharray="1.8 1.1" stroke-linecap="butt"/><path d="M767.3 168.4v-5.4l2.4-1.6l2.6 2.4l4.8-4.4l2.1 1.8v7.2z" fill="#1a78b8"/><circle cx="768.6" cy="160.4" r="0.9" fill="#1a78b8"/><path d="M765.8 180.3h12.6L767.8 190.6M767.8 179.2v12.2h11" stroke="#1d7896" stroke-width="1.3"/></svg><div class="a" style="left:780.5px;top:179px;width:156px;height:14.2px;background:#fbfbfb;box-shadow:1px 1.5px 1.6px rgba(0,0,0,0.42)"></div><svg class="t" style="left:782.60px;top:180.80px" width="149.55" height="11.96" viewBox="0 0 15000 1200" fill="#3c3c3c" ><text x="0" y="880" font-weight="500">轮廓描摹：从图片中提取矢量线条</text></svg></body></html>
